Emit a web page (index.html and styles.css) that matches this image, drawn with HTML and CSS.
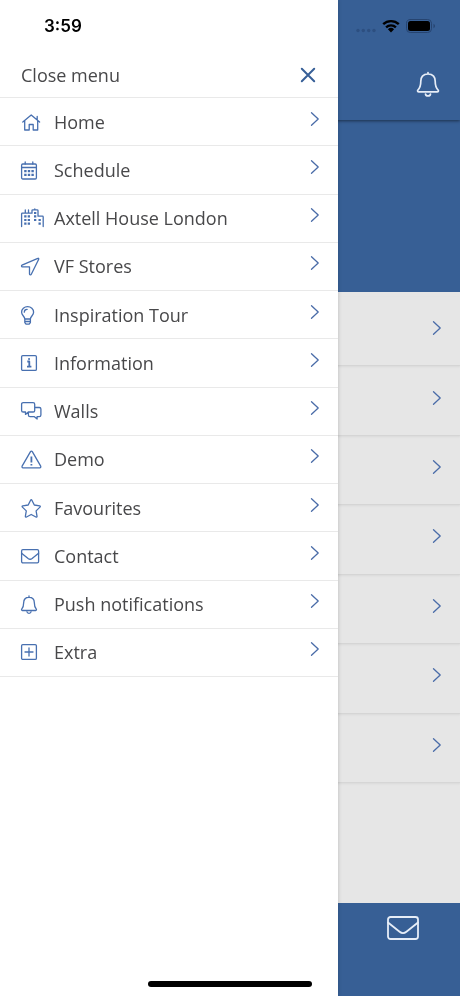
FILE: index.html
```html
<!DOCTYPE html>
<html lang="en">
<head>
    <meta charset="UTF-8">
    <meta name="viewport" content="width=device-width, initial-scale=1.0">
    <title>Menu</title>
    <link rel="stylesheet" href="styles.css">
</head>
<body>
    <svg class="symbols" aria-hidden="true">
        <symbol id="chevron" viewBox="0 0 10 16">
            <path d="M1.500 1.700 8.200 8l-6.700 6.300"/>
        </symbol>
        <symbol id="bell" viewBox="0 0 24 24">
            <path d="M9 4v1.4M9 5.400c-3.900 0-5.300 2.400-5.300 5.200 0 4-.8 5.200-2 6.600-.4.600-.1 1.300.6 1.300h13.400c.7 0 1-.7.6-1.300-1.200-1.400-2-2.600-2-6.600 0-2.800-1.400-5.200-5.300-5.200zM7 20c.3 1.700 3.700 1.700 4 0"/>
        </symbol>
        <symbol id="envelope" viewBox="0 0 24 24">
            <rect x="1.600" y="5.600" width="17" height="13.200" rx="1.300"/>
            <path d="M1.600 9.200l6.500 5.300c1.300 1 2.700 1 4 0l6.500-5.300"/>
        </symbol>
    </svg>

    <header class="status">
        <span class="time">3:59</span>
        <div class="signals">
            <svg class="dots" viewBox="0 0 20 14">
                <circle cx="2" cy="11.500" r="1.700"/><circle cx="7.300" cy="11.500" r="1.700"/>
                <circle cx="12.700" cy="11.500" r="1.700"/><circle cx="18" cy="11.500" r="1.700"/>
            </svg>
            <svg class="wifi" viewBox="0 0 18 14">
                <path d="M1.200 5.200a11.300 11.300 0 0 1 15.600 0M4.100 8.300a7.200 7.200 0 0 1 9.800 0"/>
                <path class="solid" d="M9 13.400 5.900 10.300a4.500 4.500 0 0 1 6.200 0z"/>
            </svg>
            <svg class="battery" viewBox="0 0 30 14">
                <rect class="case" x=".5" y=".5" width="25" height="13" rx="3.800"/>
                <rect x="2" y="2" width="22" height="10" rx="2.500"/>
                <path class="nub" d="M27.500 4.800c2 .8 2 3.600 0 4.400z"/>
            </svg>
        </div>
    </header>

    <nav class="drawer">
        <div class="drawer-head">
            <label for="close">Close menu</label>
            <button id="close" class="close" type="button">
                <svg viewBox="0 0 16 16"><path d="M1.800 1.800l12.400 12.400M14.200 1.800 1.800 14.200"/></svg>
            </button>
        </div>
        <ul class="menu">
            <li><a href="#home">
                <svg class="icon" viewBox="0 0 24 24"><path d="M2.800 12 11.200 5l8.400 7M17.200 9.800V6.500M4.700 10.800V20h4.500v-5.500h4V20h4.500v-9.200"/></svg>
                <span>Home</span>
                <svg class="chevron"><use href="#chevron"/></svg>
            </a></li>
            <li><a href="#schedule">
                <svg class="icon" viewBox="0 0 24 24"><rect x="1.600" y="6" width="14.800" height="15" rx="1.200"/><path d="M1.600 9.500h14.800M5.200 4v2M12.800 4v2"/><path class="pips" d="M4.200 13.200h2.400M7.800 13.200h2.400M11.400 13.200h2.400M4.200 16.800h2.400M7.800 16.800h2.400M11.400 16.800h2.400"/></svg>
                <span>Schedule</span>
                <svg class="chevron"><use href="#chevron"/></svg>
            </a></li>
            <li><a href="#axtell">
                <svg class="icon" viewBox="0 0 24 24"><path d="M1.600 20.500V8c0-.6.300-.8.800-.8h9.500M5.300 4v3.200M8.500 4v3.200M12 7.200V4.600c0-.5.300-.8.800-.8h4.400c.5 0 .8.300.8.800v5.600h4.400c.5 0 .8.300.8.800v9.500M14.800 2.800v1"/><path class="pips" d="M4.200 10.400h2.300M7.700 10.400h2.300M4.200 14h2.300M7.700 14h2.300M4.200 17.600h2.300M7.700 17.600h2.300M14 7h2.300M14 10.400h2.300M14 14h2.300M18.500 14h2.300M18.500 17.600h2.300"/></svg>
                <span>Axtell House London</span>
                <svg class="chevron"><use href="#chevron"/></svg>
            </a></li>
            <li><a href="#stores">
                <svg class="icon" viewBox="0 0 24 24"><path d="M17.800 4.300 2 11.200c-.8.400-.6 1.600.3 1.600h7.200V20c0 1 1.400 1.200 1.800.3L18.700 5.200c.3-.6-.3-1.200-.9-.9z"/></svg>
                <span>VF Stores</span>
                <svg class="chevron"><use href="#chevron"/></svg>
            </a></li>
            <li><a href="#tour">
                <svg class="icon" viewBox="0 0 24 24"><path d="M4.800 16c0-2.500-3.200-3.600-3.200-6.700a6 5.600 0 0 1 12 0c0 3.100-3.200 4.200-3.200 6.700zM4.300 9.200c0-1.700 1.200-2.800 2.800-2.800M4.800 16v3.600l1.400 1.600h2.800l1.400-1.600V16M4.800 18.500h5.600"/></svg>
                <span>Inspiration Tour</span>
                <svg class="chevron"><use href="#chevron"/></svg>
            </a></li>
            <li><a href="#information">
                <svg class="icon" viewBox="0 0 24 24"><rect x="1.600" y="4.600" width="14.800" height="14.800" rx="1.200"/><path class="bold" d="M7.300 10.500H9.300v5M7 15.600h4.400M8.300 8h1.500"/></svg>
                <span>Information</span>
                <svg class="chevron"><use href="#chevron"/></svg>
            </a></li>
            <li><a href="#walls">
                <svg class="icon" viewBox="0 0 24 24"><path d="M8.300 13 5.500 15.400V13H3.200c-.9 0-1.600-.7-1.600-1.600V5.200c0-.9.700-1.600 1.600-1.600h9.900c.9 0 1.600.7 1.600 1.600v6.200c0 .9-.7 1.600-1.600 1.600zM14.700 8.500h4.600c.9 0 1.600.7 1.600 1.600V16c0 .9-.7 1.600-1.600 1.600h-2.200V20l-3-2.400H10c-.9 0-1.600-.7-1.600-1.600v-3"/></svg>
                <span>Walls</span>
                <svg class="chevron"><use href="#chevron"/></svg>
            </a></li>
            <li><a href="#demo">
                <svg class="icon" viewBox="0 0 24 24"><path d="M10.500 4.700c.5-.8 1.300-.8 1.800 0L20.700 19.200c.4.800 0 1.600-.9 1.600H3c-.9 0-1.300-.8-.9-1.600z"/><path class="bold" d="M11.400 9.500v6M11.400 17v1.500"/></svg>
                <span>Demo</span>
                <svg class="chevron"><use href="#chevron"/></svg>
            </a></li>
            <li><a href="#favourites">
                <svg class="icon" viewBox="0 0 24 24"><path d="M10.600 4.200c.3-.6 1-.6 1.300 0L14.300 9l5.300.8c.7.1.9.8.4 1.300l-3.900 3.800.9 5.300c.1.700-.5 1.100-1.100.8l-4.700-2.500L6.500 21c-.6.300-1.200-.1-1.100-.8l.9-5.300-3.900-3.800c-.5-.5-.3-1.200.4-1.300L8.200 9z"/></svg>
                <span>Favourites</span>
                <svg class="chevron"><use href="#chevron"/></svg>
            </a></li>
            <li><a href="#contact">
                <svg class="icon"><use href="#envelope"/></svg>
                <span>Contact</span>
                <svg class="chevron"><use href="#chevron"/></svg>
            </a></li>
            <li><a href="#push">
                <svg class="icon"><use href="#bell"/></svg>
                <span>Push notifications</span>
                <svg class="chevron"><use href="#chevron"/></svg>
            </a></li>
            <li><a href="#extra">
                <svg class="icon" viewBox="0 0 24 24"><rect x="1.600" y="4.600" width="14.800" height="14.800" rx="1.200"/><path d="M9 8v8M5 12h8"/></svg>
                <span>Extra</span>
                <svg class="chevron"><use href="#chevron"/></svg>
            </a></li>
        </ul>
    </nav>

    <main class="page">
        <div class="topbar">
            <a href="#notifications" aria-label="Notifications">
                <svg class="big-bell" viewBox="0 0 24 28"><path d="M12 2.500v1.500M12 4c-5.200 0-7.200 3.300-7.200 7.200 0 5.200-1 6.800-2.900 8.800-.7.900-.2 1.800.9 1.800h18.400c1.100 0 1.600-.9.900-1.800-1.900-2-2.900-3.600-2.900-8.800 0-3.900-2-7.200-7.200-7.200zM9.500 24c.4 2.600 4.600 2.600 5 0"/></svg>
            </a>
        </div>
        <div class="banner"></div>
        <ul class="list">
            <li><svg class="chevron"><use href="#chevron"/></svg></li>
            <li><svg class="chevron"><use href="#chevron"/></svg></li>
            <li><svg class="chevron"><use href="#chevron"/></svg></li>
            <li><svg class="chevron"><use href="#chevron"/></svg></li>
            <li><svg class="chevron"><use href="#chevron"/></svg></li>
            <li><svg class="chevron"><use href="#chevron"/></svg></li>
            <li><svg class="chevron"><use href="#chevron"/></svg></li>
        </ul>
        <footer class="tabs">
            <a href="#messages" aria-label="Messages">
                <svg class="big-envelope" viewBox="0 0 32 24"><rect x="1" y="1" width="30" height="22" rx="2.500"/><path d="M1 6.500l11.600 9.300c2.200 1.700 4.600 1.700 6.800 0L31 6.500"/></svg>
            </a>
        </footer>
    </main>

    <div class="home-bar"></div>
</body>
</html>
```

FILE: styles.css
```css
* {
    box-sizing: border-box;
}
body {
    margin: 0;
    font-family: "Open Sans", "Noto Sans", sans-serif;
    font-size: 18px;
    color: #48484a;
    background-color: #e6e6e6;
}
ul {
    margin: 0;
    padding: 0;
    list-style: none;
}
svg {
    display: block;
    fill: none;
    stroke-linecap: round;
    stroke-linejoin: round;
}
.symbols {
    position: absolute;
    width: 0;
    height: 0;
}

/* status bar */
.status {
    position: fixed;
    top: 0;
    left: 0;
    right: 0;
    z-index: 3;
    height: 52px;
    padding: 0 24px 0 44px;
    display: flex;
    justify-content: space-between;
    align-items: center;
}
.time {
    font-family: Inter, sans-serif;
    font-size: 17px;
    font-weight: 600;
    color: #000;
}
.signals {
    display: flex;
    gap: 6px;
}
.dots {
    width: 20px;
    height: 14px;
    fill: #2d4f80;
}
.wifi {
    width: 18px;
    height: 14px;
    stroke: #000;
    stroke-width: 2.4;
    stroke-linecap: butt;
}
.wifi .solid {
    fill: #000;
    stroke: none;
}
.battery {
    width: 30px;
    height: 14px;
    fill: #000;
}
.battery .case {
    fill: none;
    stroke: #264470;
}
.battery .nub {
    fill: #264470;
}

/* side menu */
.drawer {
    position: fixed;
    top: 0;
    bottom: 0;
    left: 0;
    z-index: 2;
    width: 73.5%;
    padding-top: 52px;
    background-color: #fff;
    box-shadow: 0 0 4px rgba(0, 0, 0, 0.2);
}
.drawer-head {
    display: flex;
    justify-content: space-between;
    align-items: center;
    height: 46px;
    padding: 0 20px 0 21px;
    border-bottom: 1px solid #e9e9e9;
}
.close {
    padding: 2px;
    border: 0;
    background: none;
    cursor: pointer;
}
.close svg {
    width: 16px;
    height: 16px;
    stroke: #375f97;
    stroke-width: 2;
}
.menu {
    display: grid;
    grid-auto-rows: 1fr;
    min-height: 579px;
}
.menu li {
    border-bottom: 1px solid #e9e9e9;
}
.menu a {
    display: flex;
    align-items: center;
    gap: 10px;
    height: 100%;
    padding: 0 18px 0 20px;
    color: inherit;
    text-decoration: none;
}
.menu span {
    flex: 1;
}
.icon {
    width: 24px;
    height: 24px;
    stroke: #4870b0;
    stroke-width: 1.3;
}
.icon .pips {
    stroke-width: 2.2;
    stroke-linecap: butt;
}
.icon .bold {
    stroke-width: 1.8;
    stroke-linecap: butt;
}
.chevron {
    width: 10px;
    height: 16px;
    stroke: #4a6ca8;
    stroke-width: 1.3;
}
.menu .chevron {
    margin-bottom: 6px;
}

/* page behind the menu */
.page {
    display: flex;
    flex-direction: column;
    min-height: 100vh;
}
.topbar {
    position: relative;
    display: flex;
    justify-content: flex-end;
    align-items: flex-end;
    height: 120px;
    padding: 0 20px 22px;
    background-color: #375f95;
    box-shadow: 0 1px 3px rgba(0, 0, 0, 0.5);
}
.big-bell {
    width: 24px;
    height: 28px;
    stroke: #e6edf7;
    stroke-width: 1.7;
}
.banner {
    height: 172px;
    background-color: #375f95;
}
.list {
    display: grid;
    grid-auto-rows: 1fr;
    min-height: 491px;
    padding-top: 5px;
}
.list li {
    display: flex;
    justify-content: flex-end;
    align-items: center;
    padding: 0 18px 6px;
    border-bottom: 1px solid #d6d6d6;
    box-shadow: 0 1px 2px rgba(0, 0, 0, 0.06);
}
.tabs {
    display: flex;
    justify-content: flex-end;
    height: 93px;
    margin-top: auto;
    padding-top: 13px;
    background-color: #375f95;
}
.tabs a {
    display: flex;
    justify-content: center;
    width: 25%;
}
.big-envelope {
    width: 32px;
    height: 24px;
    stroke: #e6edf7;
    stroke-width: 1.8;
}
.home-bar {
    position: fixed;
    bottom: 9px;
    left: 50%;
    z-index: 3;
    width: 164px;
    height: 6px;
    margin-left: -82px;
    border-radius: 3px;
    background-color: #000;
}
```
